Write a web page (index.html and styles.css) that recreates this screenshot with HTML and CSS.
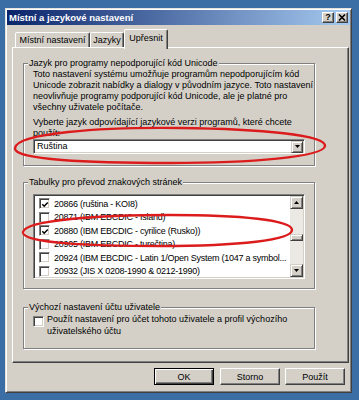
FILE: index.html
```html
<!DOCTYPE html>
<html lang="cs">
<head>
<meta charset="utf-8">
<title>Místní a jazykové nastavení</title>
<link rel="stylesheet" href="styles.css">
</head>
<body>
<div class="window">
  <div class="titlebar">
    <span class="title">Místní a jazykové nastavení</span>
    <div class="tbtns">
      <span class="tbtn help">?</span>
      <span class="tbtn"><svg width="8" height="7" viewBox="0 0 8 7"><path d="M1 0.5 L7 6.5 M7 0.5 L1 6.5" stroke="#000" stroke-width="1.6"/></svg></span>
    </div>
  </div>
  <div class="main">
    <div class="tabs">
      <span class="tab t1">Místní nastavení</span>
      <span class="tab t2">Jazyky</span>
      <span class="tab t3 active">Upřesnit</span>
    </div>
    <div class="panel">
      <div class="group g1">
        <span class="legend">Jazyk pro programy nepodporující kód Unicode</span>
        <div class="gbody">
          <p class="txt">Toto nastavení systému umožňuje programům nepodporujícím kód<br>Unicode zobrazit nabídky a dialogy v původním jazyce. Toto nastavení<br>neovlivňuje programy podporující kód Unicode, ale je platné pro<br>všechny uživatele počítače.</p>
          <p class="txt second">Vyberte jazyk odpovídající jazykové verzi programů, které chcete<br>použít:</p>
          <div class="combo">
            <span class="combo-val">Ruština</span>
            <span class="sbtn"><svg width="5" height="3" viewBox="0 0 5 3"><path d="M0 0H5L2.5 3Z" fill="#000"/></svg></span>
          </div>
        </div>
      </div>
      <div class="group g2">
        <span class="legend">Tabulky pro převod znakových stránek</span>
        <div class="gbody">
          <div class="list">
            <div class="rows">
              <div class="row"><span class="cb"><svg width="9" height="9" viewBox="0 0 9 9"><path d="M1.5 4.2 L3.6 6.4 L7.6 2.2" fill="none" stroke="#000" stroke-width="1.7"/></svg></span><span>20866 (ruština - KOI8)</span></div>
              <div class="row"><span class="cb"></span><span>20871 (IBM EBCDIC - Island)</span></div>
              <div class="row"><span class="cb"><svg width="9" height="9" viewBox="0 0 9 9"><path d="M1.5 4.2 L3.6 6.4 L7.6 2.2" fill="none" stroke="#000" stroke-width="1.7"/></svg></span><span>20880 (IBM EBCDIC - cyrilice (Rusko))</span></div>
              <div class="row"><span class="cb"></span><span>20905 (IBM EBCDIC - turečtina)</span></div>
              <div class="row"><span class="cb"></span><span>20924 (IBM EBCDIC - Latin 1/Open System (1047 a symbol...</span></div>
              <div class="row"><span class="cb"></span><span>20932 (JIS X 0208-1990 &amp; 0212-1990)</span></div>
            </div>
            <div class="vscroll">
              <span class="sbtn"><svg width="5" height="3" viewBox="0 0 5 3"><path d="M0 3H5L2.5 0Z" fill="#000"/></svg></span>
              <div class="track"><span class="thumb"></span></div>
              <span class="sbtn"><svg width="5" height="3" viewBox="0 0 5 3"><path d="M0 0H5L2.5 3Z" fill="#000"/></svg></span>
            </div>
          </div>
        </div>
      </div>
      <div class="group g3">
        <span class="legend">Výchozí nastavení účtu uživatele</span>
        <div class="gbody">
          <div class="chkrow">
            <span class="cb"></span>
            <span class="chklabel">Použít nastavení pro účet tohoto uživatele a profil výchozího<br>uživatelského účtu</span>
          </div>
        </div>
      </div>
    </div>
    <div class="buttons">
      <span class="btn default">OK</span>
      <span class="btn">Storno</span>
      <span class="btn">Použít</span>
    </div>
  </div>
</div>
<svg class="marks" width="359" height="400" viewBox="0 0 359 400">
  <path d="M15 148 C17 133 100 127 180 128 C262 129 326 135 325 146 C324 157 250 163 170 163 C90 163 13 160 15 148 Z" fill="none" stroke="#dc1c1c" stroke-width="2.4"/>
  <path d="M23 232 C25 220 100 215 170 215 C240 215 292 220 292 230 C292 240 240 246 160 246 C90 246 21 243 23 232 Z" fill="none" stroke="#dc1c1c" stroke-width="2.4"/>
</svg>
</body>
</html>
```
FILE: styles.css
```css
* { box-sizing: border-box; }
html, body { margin: 0; padding: 0; }
body {
  width: 359px;
  height: 400px;
  padding: 8px 0 0 5px;
  background: #3a6ea5;
  font-family: "Liberation Sans", Arial, sans-serif;
  font-size: 9px;
  color: #000;
  position: relative;
  overflow: hidden;
}
.window {
  width: 347px;
  height: 385px;
  background: #d4d0c8;
  border: 1px solid;
  border-color: #e6e3dc #404040 #404040 #e6e3dc;
  box-shadow: inset 1px 1px 0 #fff, inset -1px -1px 0 #808080;
  padding: 1px;
  display: flex;
  flex-direction: column;
}
.titlebar {
  height: 15px;
  background: linear-gradient(to right, #0a246a, #a6caf0);
  display: flex;
  align-items: center;
  justify-content: space-between;
  padding: 0 2px 0 2px;
}
.title {
  color: #fff;
  font-weight: bold;
  font-size: 9.5px;
}
.tbtns { display: flex; gap: 2px; }
.tbtn {
  width: 12px;
  height: 11px;
  background: #d4d0c8;
  border: 1px solid;
  border-color: #fff #404040 #404040 #fff;
  box-shadow: inset -1px -1px 0 #808080;
  display: flex;
  align-items: center;
  justify-content: center;
  font-weight: bold;
  font-size: 9px;
  line-height: 9px;
}
.main {
  flex: 1;
  padding: 4px 1px 0 5px;
  display: flex;
  flex-direction: column;
}
.tabs {
  height: 18px;
  display: flex;
  align-items: flex-end;
  padding-left: 3px;
  position: relative;
  z-index: 1;
}
.tab {
  height: 15px;
  border: 1px solid;
  border-bottom: none;
  border-color: #fff #404040 transparent #fff;
  box-shadow: inset -1px 0 0 #808080;
  border-radius: 2px 2px 0 0;
  background: #d4d0c8;
  display: flex;
  align-items: center;
  justify-content: center;
  padding-bottom: 1px;
}
.t1 { width: 75px; }
.t2 { width: 34px; }
.t3 { width: 44px; }
.tab.active {
  height: 20px;
  margin-bottom: -2px;
  padding-bottom: 4px;
}
.panel {
  height: 316px;
  border: 1px solid;
  border-color: #fff #404040 #404040 #fff;
  box-shadow: inset -1px -1px 0 #808080;
  padding: 0 0 0 10px;
  display: flex;
  flex-direction: column;
}
.group {
  width: 292px;
  border: 1px solid #808080;
  box-shadow: 1px 1px 0 #fff, inset 1px 1px 0 #fff;
  display: flex;
  flex-direction: column;
}
.g1 { margin-top: 15px; height: 103px; }
.g2 { margin-top: 16px; height: 107px; }
.g3 { margin-top: 18px; height: 42px; }
.legend {
  display: block;
  align-self: flex-start;
  margin: -6px 0 0 4px;
  padding: 0 1px;
  line-height: 11px;
  height: 11px;
  background: #d4d0c8;
  white-space: nowrap;
}
.gbody {
  padding: 0 9px;
}
.txt {
  margin: 0;
  line-height: 11px;
  white-space: nowrap;
}
.txt.second { margin-top: 4px; }
.combo {
  height: 15px;
  background: #fff;
  border: 1px solid;
  border-color: #808080 #fff #fff #808080;
  box-shadow: inset 1px 1px 0 #404040, inset -1px -1px 0 #d4d0c8;
  display: flex;
  align-items: center;
  justify-content: space-between;
  padding: 1px 1px 1px 3px;
  margin-top: 0;
}
.combo-val { line-height: 11px; }
.sbtn {
  width: 12px;
  height: 12px;
  background: #d4d0c8;
  border: 1px solid;
  border-color: #d4d0c8 #404040 #404040 #d4d0c8;
  box-shadow: inset 1px 1px 0 #fff, inset -1px -1px 0 #808080;
  display: flex;
  align-items: center;
  justify-content: center;
  flex: none;
}
.g2 .gbody { padding-top: 6px; }
.list {
  height: 85px;
  background: #fff;
  border: 1px solid;
  border-color: #808080 #fff #fff #808080;
  box-shadow: inset 1px 1px 0 #404040, inset -1px -1px 0 #d4d0c8;
  padding: 1px;
  display: flex;
}
.rows {
  flex: 1;
  min-width: 0;
  overflow: hidden;
  padding: 1px 0 0 4px;
}
.row {
  height: 13.5px;
  display: flex;
  align-items: center;
  gap: 4px;
  white-space: nowrap;
  letter-spacing: -0.25px;
}
.cb {
  width: 11px;
  height: 11px;
  flex: none;
  background: #fff;
  border: 1px solid;
  border-color: #808080 #fff #fff #808080;
  box-shadow: inset 1px 1px 0 #404040, inset -1px -1px 0 #d4d0c8;
  display: flex;
  align-items: center;
  justify-content: center;
}
.cb svg { margin-left: 1px; margin-top: 1px; }
.vscroll {
  width: 13px;
  display: flex;
  flex-direction: column;
  flex: none;
}
.vscroll .sbtn { width: 13px; height: 13px; }
.track {
  flex: 1;
  background: #ebe9e4;
  padding-top: 25px;
}
.thumb {
  display: block;
  height: 7px;
  background: #d4d0c8;
  border: 1px solid;
  border-color: #d4d0c8 #404040 #404040 #d4d0c8;
  box-shadow: inset 1px 1px 0 #fff, inset -1px -1px 0 #808080;
}
.chkrow {
  display: flex;
  align-items: flex-start;
  gap: 3px;
  margin-top: 1px;
}
.chkrow .cb { margin-top: 2px; }
.chklabel { line-height: 11.5px; white-space: nowrap; }
.buttons {
  display: flex;
  justify-content: flex-end;
  margin-top: 5px;
  padding-right: 4px;
}
.btn {
  width: 60px;
  height: 17px;
  border: 1px solid;
  border-color: #fff #404040 #404040 #fff;
  box-shadow: inset -1px -1px 0 #808080;
  display: flex;
  align-items: center;
  justify-content: center;
  margin-left: 5px;
}
.btn.default {
  border-color: #000;
  box-shadow: inset 1px 1px 0 #fff, inset -1px -1px 0 #404040, inset -2px -2px 0 #808080;
  margin-right: 1px;
}
.marks {
  position: absolute;
  top: 0;
  left: 0;
  pointer-events: none;
}
```
